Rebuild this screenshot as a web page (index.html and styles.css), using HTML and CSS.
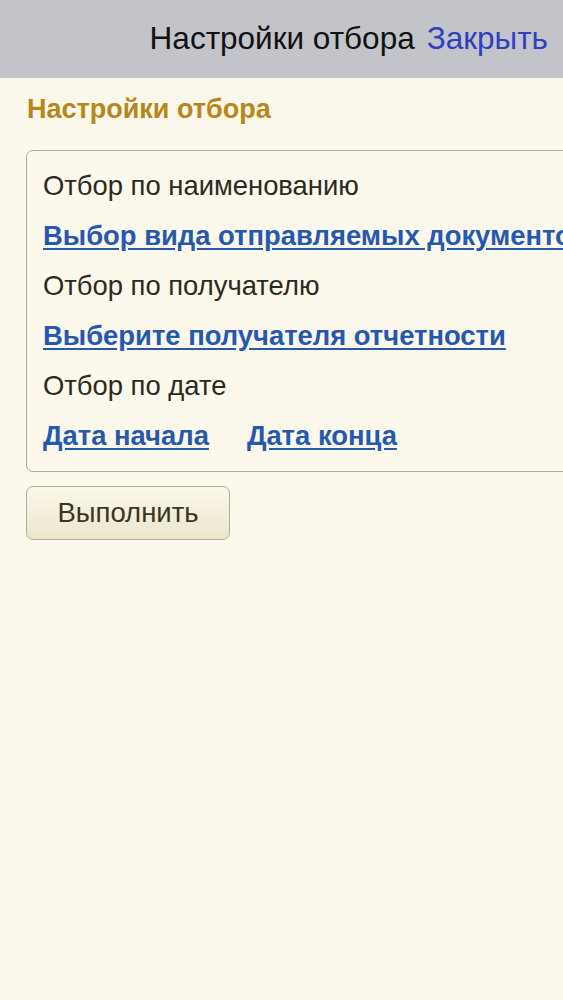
FILE: index.html
```html
<!DOCTYPE html>
<html lang="ru">
<head>
<meta charset="utf-8">
<title>Настройки отбора</title>
<link rel="stylesheet" href="styles.css">
</head>
<body>
<header class="topbar">
  <span class="topbar-title">Настройки отбора</span>
  <a class="topbar-close" href="#">Закрыть</a>
</header>
<main class="content">
  <h1 class="section-title">Настройки отбора</h1>
  <div class="group">
    <div class="row label">Отбор по наименованию</div>
    <div class="row"><a class="link" href="#">Выбор вида отправляемых документов</a></div>
    <div class="row label">Отбор по получателю</div>
    <div class="row"><a class="link" href="#">Выберите получателя отчетности</a></div>
    <div class="row label">Отбор по дате</div>
    <div class="row links">
      <a class="link" href="#">Дата начала</a>
      <a class="link" href="#">Дата конца</a>
    </div>
  </div>
  <button class="btn" type="button">Выполнить</button>
</main>
</body>
</html>
```
FILE: styles.css
```css
html, body {
  margin: 0;
  padding: 0;
}
body {
  background: #fcf8ec;
  font-family: "Liberation Sans", Arial, sans-serif;
  color: #2a2a22;
  overflow: hidden;
  width: 563px;
  height: 1000px;
}
.topbar {
  height: 78px;
  background: #c3c4c9;
  display: flex;
  justify-content: flex-end;
  align-items: center;
  gap: 12px;
  padding-right: 15px;
  padding-bottom: 2px;
  box-sizing: border-box;
  font-size: 31.5px;
}
.topbar-title {
  color: #111;
}
.topbar-close {
  color: #2f3fbf;
  text-decoration: none;
}
.content {
  padding: 94px 0 0 26px;
  padding-top: 16px;
  width: 537px;
  overflow: hidden;
}
.section-title {
  margin: 0 0 0 1px;
  font-size: 27px;
  font-weight: bold;
  color: #b8861a;
  line-height: 30px;
}
.group {
  margin-top: 26px;
  width: 600px;
  border: 1.5px solid #a8a8a0;
  border-radius: 7px;
  padding: 20px 16px 20px 16px;
  box-sizing: border-box;
  white-space: nowrap;
}
.row {
  font-size: 27.4px;
  line-height: 30px;
  height: 50px;
}
.label {
  color: #2a2a22;
}
.link {
  color: #2559b0;
  font-weight: bold;
  text-decoration: underline;
  text-underline-offset: 3px;
}
.links {
  display: flex;
  gap: 38px;
  height: 30px;
}
.btn {
  margin-top: 14px;
  width: 204px;
  height: 54px;
  border: 1.5px solid #b0ad9c;
  border-radius: 7px;
  background: linear-gradient(#fbf8ea, #ece6cc);
  font-family: "Liberation Sans", Arial, sans-serif;
  font-size: 27.5px;
  color: #3a3520;
  padding: 0;
}
```
